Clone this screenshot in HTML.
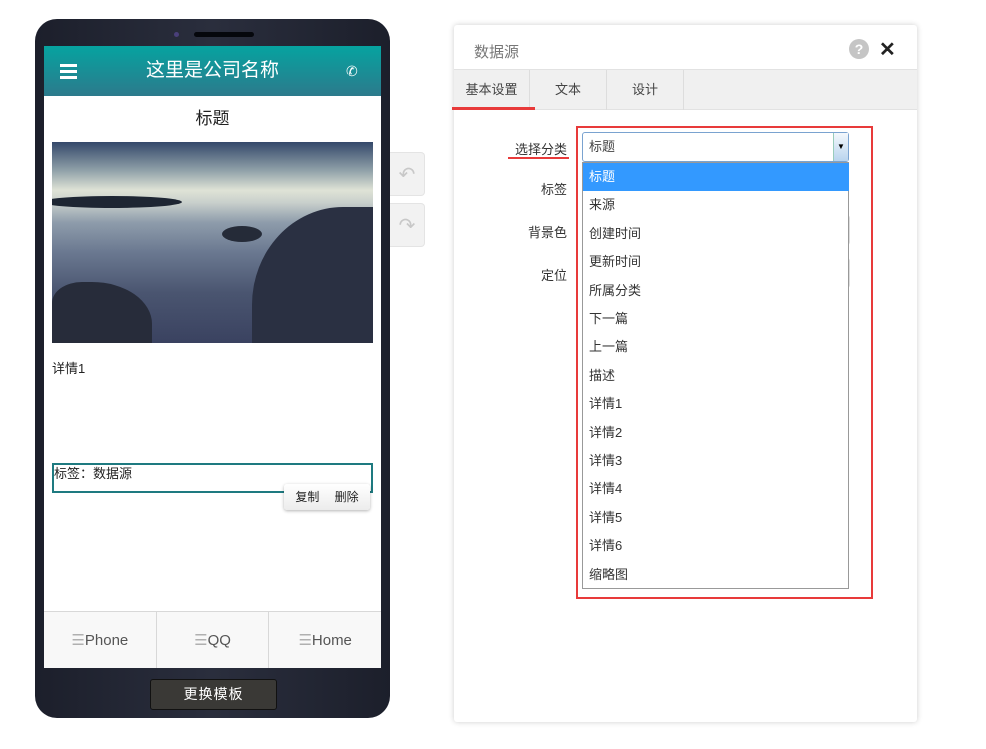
<!DOCTYPE html>
<html><head><meta charset="utf-8"><style>
*{box-sizing:border-box;margin:0;padding:0}
body{width:986px;height:749px;background:#fff;position:relative;font-family:"Liberation Sans","Noto Sans CJK SC",sans-serif;overflow:hidden}
.a{position:absolute}
.phone{left:35px;top:19px;width:355px;height:699px;border-radius:22px;background:linear-gradient(90deg,#1c1f2b,#2a2e3d 50%,#1c1f2b)}
.scr{left:44px;top:46px;width:337px;height:622px;background:#fff;overflow:hidden}
.hdr{left:0;top:0;width:337px;height:50px;background:linear-gradient(#06a3a0,#2c7a8c);color:#fff;font-size:19px;text-align:center;line-height:50px}
.nav{left:0;top:565px;width:337px;height:57px;background:#f8f8f8;border-top:1px solid #d8d8d8;display:flex}
.nav div{flex:1;text-align:center;line-height:57px;font-size:15px;color:#555;border-right:1px solid #d8d8d8}
.nav div:last-child{border:none}
.nav span{color:#b0b0b0}
.ud{left:390px;width:35px;height:44px;background:#f2f2f2;border:1px solid #e4e4e4;border-left:none;border-radius:0 4px 4px 0;color:#c8c8c8;font-size:20px;text-align:center;line-height:44px}
.panel{left:454px;top:25px;width:463px;height:697px;background:#fff;box-shadow:0 0 6px rgba(0,0,0,.2);border-radius:3px}
.tabs{left:0;top:44px;width:463px;height:41px;background:#f0f0f0;border-top:1px solid #e2e2e2;border-bottom:1px solid #e2e2e2}
.tab{top:0;height:40px;line-height:40px;text-align:center;font-size:13px;color:#444;border-right:1px solid #ddd}
.lbl{font-size:13px;color:#333;text-align:right;width:80px}
.it{left:0;width:266px;height:28.4px;line-height:28px;padding-left:6px;font-size:13px;color:#333}
</style></head><body>
<div class="a phone">
  <div class="a" style="left:139px;top:13px;width:5px;height:5px;border-radius:50%;background:#4a3f7a"></div>
  <div class="a" style="left:159px;top:13px;width:60px;height:5px;border-radius:3px;background:#05070c"></div>
</div>
<div class="a scr">
  <div class="a hdr">这里是公司名称
    <div class="a" style="left:16px;top:18px;width:17px;height:3px;background:#fff;box-shadow:0 6px #fff,0 12px #fff"></div>
    <div class="a" style="left:302px;top:0;font-size:14px">✆</div>
  </div>
  <div class="a" style="left:0;top:58px;width:337px;text-align:center;font-size:17px;color:#222">标题</div>
  <div class="a" style="left:8px;top:96px;width:321px;height:201px;overflow:hidden;background:linear-gradient(180deg,#34486a 0%,#8fa0a8 14%,#dfe3d6 24%,#c9d0cc 30%,#8e9cab 40%,#6a7890 55%,#4a5570 75%,#3a4260 100%)">
    <div class="a" style="left:-10px;top:54px;width:140px;height:12px;background:#1e2633;border-radius:50%"></div>
    <div class="a" style="left:0;top:140px;width:100px;height:70px;background:#272c3a;border-radius:30% 60% 0 0"></div>
    <div class="a" style="left:200px;top:65px;width:130px;height:140px;background:#2a3042;border-radius:70% 0 0 0"></div>
    <div class="a" style="left:170px;top:84px;width:40px;height:16px;background:#252b38;border-radius:50%"></div>
  </div>
  <div class="a" style="left:8px;top:312px;font-size:13px;color:#222">详情1</div>
  <div class="a" style="left:8px;top:417px;width:321px;height:30px;border:2px solid #1e7a80;font-size:13px;line-height:18px;color:#222">标签：数据源</div>
  <div class="a" style="left:240px;top:438px;width:86px;height:26px;background:linear-gradient(#fff,#ececec);border-radius:3px;box-shadow:0 1px 3px rgba(0,0,0,.3);font-size:12px;line-height:26px;color:#222;word-spacing:12px;text-align:center">复制 删除</div>
  <div class="a nav"><div><span>☰</span>Phone</div><div><span>☰</span>QQ</div><div><span>☰</span>Home</div></div>
</div>
<div class="a" style="left:150px;top:679px;width:127px;height:31px;background:#3a3936;border:1px solid #111;border-radius:3px;color:#fff;font-size:14px;text-align:center;line-height:29px;letter-spacing:1px">更换模板</div>
<div class="a ud" style="top:152px">↶</div>
<div class="a ud" style="top:203px">↷</div>
<div class="a panel">
  <div class="a" style="left:20px;top:16px;font-size:15px;color:#777">数据源</div>
  <div class="a" style="left:395px;top:14px;width:20px;height:20px;border-radius:50%;background:#c5c5c5;color:#fff;font-weight:bold;font-size:14px;text-align:center;line-height:20px">?</div>
  <div class="a" style="left:425px;top:12px;font-size:20px;font-weight:bold;color:#222">✕</div>
  <div class="a tabs">
    <div class="a tab" style="left:0;width:76px;background:#f0f0f0">基本设置</div>
    <div class="a tab" style="left:76px;width:77px">文本</div>
    <div class="a tab" style="left:153px;width:77px">设计</div>
  </div>
  <div class="a" style="left:-2px;top:82px;width:83px;height:3px;background:#e83a3a"></div>
  <div class="a lbl" style="left:33px;top:114px">选择分类</div>
  <div class="a" style="left:54px;top:132px;width:61px;height:2px;background:#e83a3a"></div>
  <div class="a lbl" style="left:33px;top:154px">标签</div>
  <div class="a lbl" style="left:33px;top:197px">背景色</div>
  <div class="a lbl" style="left:33px;top:240px">定位</div>
  <div class="a" style="left:128px;top:190px;width:268px;height:30px;border:1px solid #ddd;border-radius:3px"></div>
  <div class="a" style="left:128px;top:233px;width:268px;height:30px;border:1px solid #ddd;border-radius:3px"></div>
  <div class="a" style="left:122px;top:101px;width:297px;height:473px;border:2px solid #e83a3a"></div>
  <div class="a" style="left:128px;top:107px;width:267px;height:30px;border:1px solid #7aa3d0;border-radius:3px;background:#fff;font-size:13px;line-height:28px;padding-left:6px;color:#444">标题
    <div class="a" style="right:0;top:0;width:15px;height:28px;background:linear-gradient(#f4f8fc,#b8d4ee);border-left:1px solid #9cb;font-size:8px;text-align:center;line-height:28px;color:#000;padding:0">▼</div>
  </div>
  <div class="a" style="left:128px;top:137px;width:267px;height:427px;border:1px solid #999;background:#fff">
    <div class="a it" style="top:0;background:#3399ff;color:#fff">标题</div>
    <div class="a it" style="top:28.4px">来源</div>
    <div class="a it" style="top:56.8px">创建时间</div>
    <div class="a it" style="top:85.2px">更新时间</div>
    <div class="a it" style="top:113.6px">所属分类</div>
    <div class="a it" style="top:142px">下一篇</div>
    <div class="a it" style="top:170.4px">上一篇</div>
    <div class="a it" style="top:198.8px">描述</div>
    <div class="a it" style="top:227.2px">详情1</div>
    <div class="a it" style="top:255.6px">详情2</div>
    <div class="a it" style="top:284px">详情3</div>
    <div class="a it" style="top:312.4px">详情4</div>
    <div class="a it" style="top:340.8px">详情5</div>
    <div class="a it" style="top:369.2px">详情6</div>
    <div class="a it" style="top:397.6px">缩略图</div>
  </div>
</div>
</body></html>
